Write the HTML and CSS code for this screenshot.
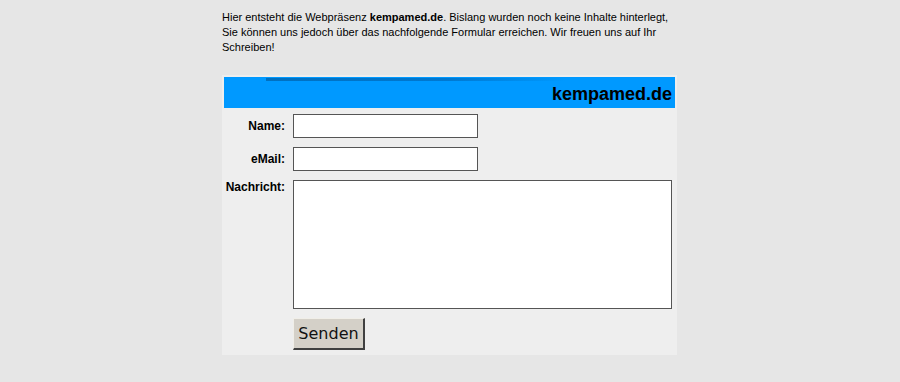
FILE: index.html
```html
<!DOCTYPE html>
<html lang="de">
<head>
    <meta charset="UTF-8">
    <title>kempamed.de</title>
    <link rel="stylesheet" href="styles.css">
</head>
<body>
    <div class="page">
        <p class="intro">Hier entsteht die Webpräsenz <b>kempamed.de</b>. Bislang wurden noch keine Inhalte hinterlegt, Sie können uns jedoch über das nachfolgende Formular erreichen. Wir freuen uns auf Ihr Schreiben!</p>

        <div class="panel">
            <div class="header">
                <div class="header-line"></div>
                <div class="header-title">kempamed.de</div>
            </div>

            <form class="contact" onsubmit="return false;">
                <div class="row">
                    <label for="name">Name:</label>
                    <input type="text" id="name" class="field">
                </div>
                <div class="row">
                    <label for="email">eMail:</label>
                    <input type="text" id="email" class="field">
                </div>
                <div class="row row-top">
                    <label for="msg">Nachricht:</label>
                    <textarea id="msg" class="message"></textarea>
                </div>
                <div class="row">
                    <span class="spacer"></span>
                    <button type="submit" class="send">Senden</button>
                </div>
            </form>
        </div>
    </div>
</body>
</html>
```

FILE: styles.css
```css
body {
    margin: 0;
    padding: 0;
    background: #e6e6e6;
    font-family: 'Liberation Sans', Arial, sans-serif;
    color: #000;
}

.page {
    width: 455px;
    margin: 0 0 0 calc(50% - 228px);
    padding-top: 10px;
}

.intro {
    margin: 0 0 20px 0;
    font-size: 11px;
    line-height: 15px;
}

.panel {
    background: #eeeeee;
    padding: 2px 2px 5px 2px;
}

.header {
    background: #0099ff;
    height: 31px;
    display: flex;
    flex-direction: column;
}

.header-line {
    height: 3px;
    margin: 1px 0 0 42px;
    width: 300px;
    background: linear-gradient(to right, #0070c0, #0078d0 60%, rgba(0, 120, 208, 0));
}

.header-title {
    text-align: right;
    font-size: 18px;
    font-weight: bold;
    padding: 3px 3px 0 0;
    color: #000;
}

.contact {
    display: flex;
    flex-direction: column;
    gap: 9px;
    padding-top: 6px;
}

.row {
    display: flex;
    align-items: center;
    gap: 8px;
}

.row-top {
    align-items: flex-start;
}

.row label,
.spacer {
    width: 61px;
    flex: none;
    text-align: right;
    font-size: 12px;
    font-weight: bold;
}

.field {
    display: block;
    box-sizing: border-box;
    width: 185px;
    height: 24px;
    margin: 0;
    border: 1px solid #555;
    background: #fff;
}

.message {
    display: block;
    box-sizing: border-box;
    width: 379px;
    height: 129px;
    margin: 0;
    border: 1px solid #555;
    background: #fff;
    resize: none;
}

.send {
    display: block;
    box-sizing: border-box;
    width: 72px;
    height: 32px;
    margin: 0;
    padding: 0;
    font-family: 'DejaVu Sans', sans-serif;
    font-size: 16px;
    color: #111;
    background: #d4d0c8;
    border-top: 1px solid #f0eee8;
    border-left: 1px solid #f0eee8;
    border-right: 2px solid #404040;
    border-bottom: 2px solid #404040;
}
```
